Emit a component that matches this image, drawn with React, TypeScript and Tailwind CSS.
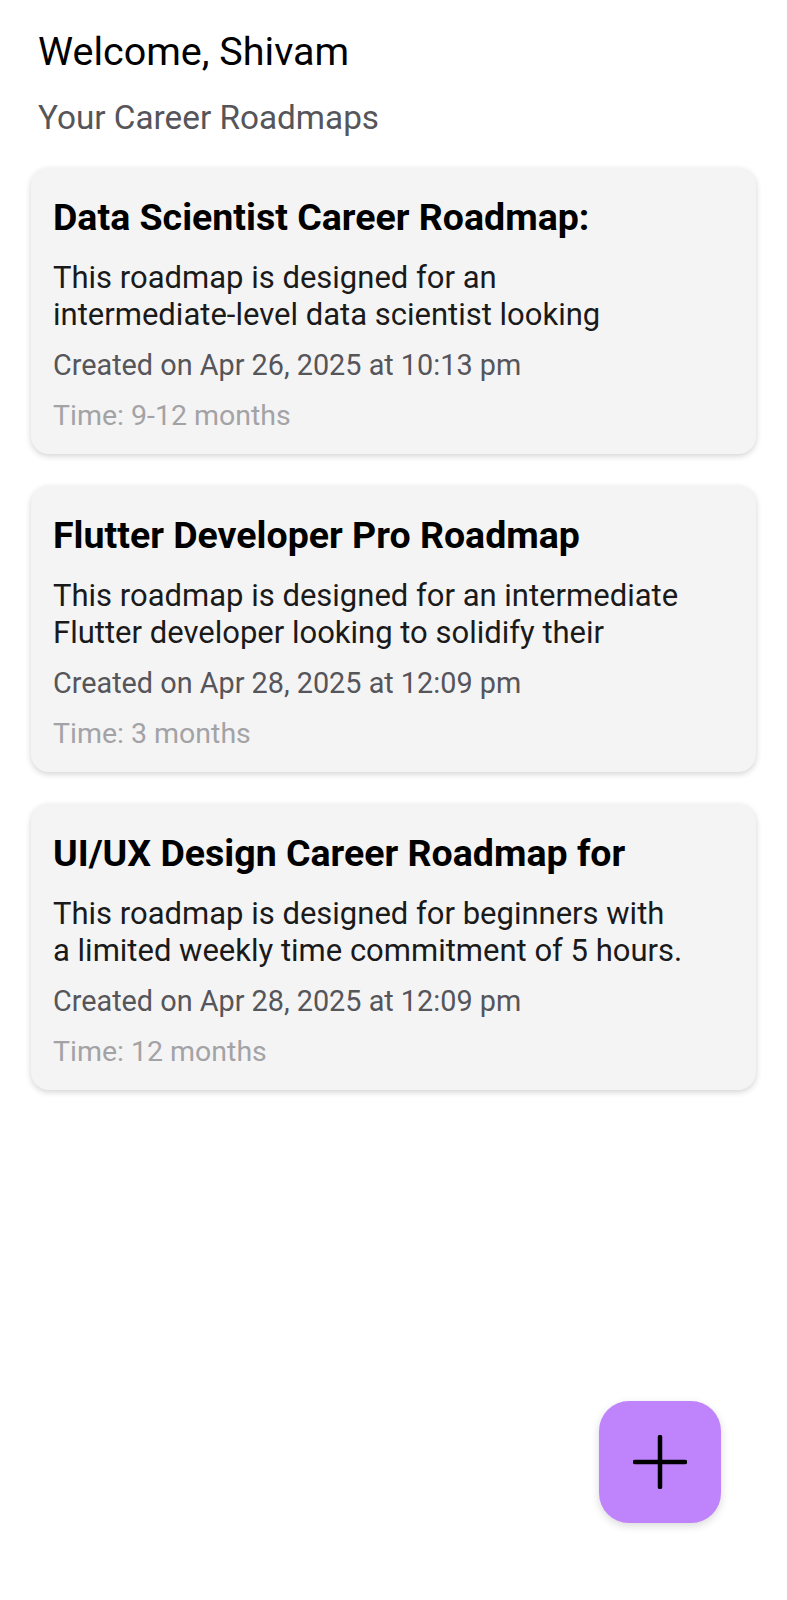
import React from "react";

type Roadmap = {
    title: string;
    description: string[];
    created: string;
    time: string;
};

const roadmaps: Roadmap[] = [
    {
        title: "Data Scientist Career Roadmap:",
        description: ["This roadmap is designed for an", "intermediate-level data scientist looking"],
        created: "Created on Apr 26, 2025 at 10:13 pm",
        time: "Time: 9-12 months",
    },
    {
        title: "Flutter Developer Pro Roadmap",
        description: ["This roadmap is designed for an intermediate", "Flutter developer looking to solidify their"],
        created: "Created on Apr 28, 2025 at 12:09 pm",
        time: "Time: 3 months",
    },
    {
        title: "UI/UX Design Career Roadmap for",
        description: ["This roadmap is designed for beginners with", "a limited weekly time commitment of 5 hours."],
        created: "Created on Apr 28, 2025 at 12:09 pm",
        time: "Time: 12 months",
    },
];

function RoadmapCard({ roadmap }: { roadmap: Roadmap }) {
    return (
        <div className="h-[286px] rounded-[18px] bg-[#f4f4f5] px-[22px] pt-[27px] shadow-[0_2px_6px_rgba(0,0,0,0.18)]">
            <h2 className="text-[37.5px] font-bold leading-[44px] text-black whitespace-nowrap">{roadmap.title}</h2>
            <p className="mt-[20px] text-[31px] leading-[37px] text-[#1a1a1a]">
                {roadmap.description.map((line, i) => (
                    <span key={i} className="block whitespace-nowrap">
                        {line}
                    </span>
                ))}
            </p>
            <p className="mt-[14px] text-[28.8px] leading-[36px] text-[#55555a] whitespace-nowrap">{roadmap.created}</p>
            <p className="mt-[15px] text-[28.5px] leading-[36px] text-[#a3a3a6]">{roadmap.time}</p>
        </div>
    );
}

function App() {
    return (
        <div className="relative min-h-[1600px] bg-white" style={{ fontFamily: "Roboto, 'Noto Sans', sans-serif" }}>
            <div className="px-[38px] pt-[29px]">
                <h1 className="text-[39.5px] leading-[46px] text-black">Welcome, Shivam</h1>
                <p className="mt-[23px] text-[33.3px] leading-[40px] text-[#55555a]">Your Career Roadmaps</p>
            </div>
            <div className="mt-[30px] flex flex-col gap-[32px] px-[31px]">
                {roadmaps.map((roadmap, i) => (
                    <RoadmapCard key={i} roadmap={roadmap} />
                ))}
            </div>
            <button className="absolute left-[599px] top-[1401px] flex h-[122px] w-[122px] items-center justify-center rounded-[30px] bg-[#bf83fc] shadow-[0_3px_8px_rgba(0,0,0,0.15)]">
                <svg width="54" height="54" viewBox="0 0 54 54" fill="none" stroke="#000" strokeWidth="4.5" strokeLinecap="round">
                    <path d="M27 2v50M2 27h50" />
                </svg>
            </button>
        </div>
    );
}

export default App;
